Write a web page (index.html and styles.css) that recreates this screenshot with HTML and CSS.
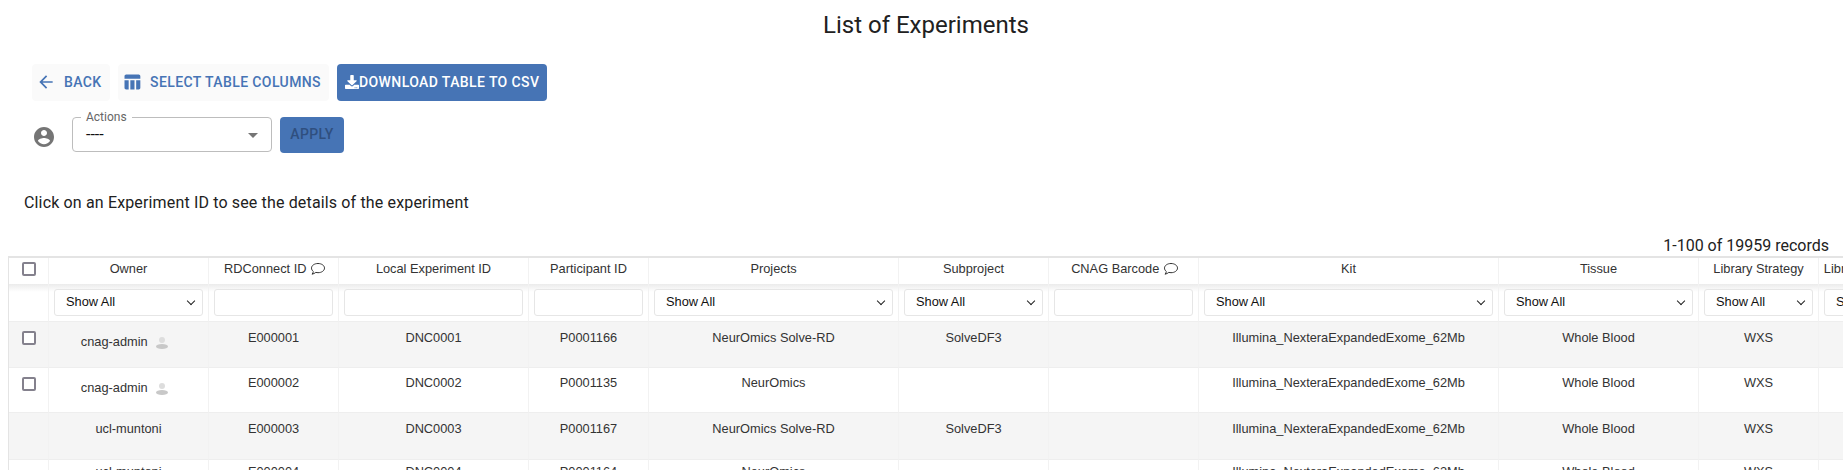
FILE: index.html
```html
<!DOCTYPE html>
<html lang="en">
<head>
<meta charset="utf-8">
<title>List of Experiments</title>
<link rel="stylesheet" href="styles.css">
</head>
<body>
<h1 class="title">List of Experiments</h1>
<div class="toolbar">
  <button class="btn btn-light back"><svg class="ico" viewBox="0 0 24 24"><path d="M20 11H7.83l5.59-5.59L12 4l-8 8 8 8 1.41-1.41L7.83 13H20v-2z"/></svg><span>Back</span></button>
  <button class="btn btn-light cols"><svg class="ico" viewBox="0 0 24 24"><path d="M10 10.02h5V21h-5zM17 21h3c1.1 0 2-.9 2-2v-9h-5v11zm3-18H5c-1.1 0-2 .9-2 2v3h19V5c0-1.1-.9-2-2-2zM3 19c0 1.1.9 2 2 2h3V10H3v9z"/></svg><span>Select table columns</span></button>
  <button class="btn btn-solid dl"><svg class="ico-sm" viewBox="0 0 512 512"><path d="M216 0h80c13.3 0 24 10.7 24 24v168h87.7c17.8 0 26.7 21.5 14.1 34.1L269.7 378.3c-7.5 7.5-19.8 7.5-27.3 0L90.1 226.100c-12.6-12.6-3.7-34.100 14.100-34.100H192V24c0-13.3 10.700-24 24-24zm296 376v112c0 13.3-10.700 24-24 24H24c-13.3 0-24-10.700-24-24V376c0-13.3 10.700-24 24-24h146.700l49 49c20.100 20.100 52.500 20.100 72.600 0l49-49H488c13.3 0 24 10.700 24 24zm-124 88c0-11-9-20-20-20s-20 9-20 20 9 20 20 20 20-9 20-20zm64 0c0-11-9-20-20-20s-20 9-20 20 9 20 20 20 20-9 20-20z"/></svg><span>Download table to CSV</span></button>
</div>
<div class="actions">
  <svg class="user" viewBox="0 0 24 24"><path d="M12 2C6.48 2 2 6.48 2 12s4.48 10 10 10 10-4.48 10-10S17.52 2 12 2zm0 3c1.66 0 3 1.34 3 3s-1.34 3-3 3-3-1.34-3-3 1.34-3 3-3zm0 14.2c-2.5 0-4.71-1.28-6-3.22.03-1.99 4-3.08 6-3.08 1.99 0 5.97 1.09 6 3.08-1.29 1.94-3.5 3.22-6 3.22z"/></svg>
  <div class="field">
    <span class="legend">Actions</span>
    <span class="val">----</span>
    <span class="caret"></span>
  </div>
  <button class="btn btn-solid apply">Apply</button>
</div>
<p class="hint">Click on an Experiment ID to see the details of the experiment</p>
<div class="records">1-100 of 19959 records</div>
<div class="wrap">
<table class="grid">
  <colgroup>
    <col class="c0"><col class="c1"><col class="c2"><col class="c3"><col class="c4"><col class="c5"><col class="c6"><col class="c7"><col class="c8"><col class="c9"><col class="c10"><col class="c11">
  </colgroup>
  <thead>
    <tr class="heads">
      <th><span class="cb"></span></th>
      <th>Owner</th>
      <th>RDConnect ID <svg class="bubble" viewBox="0 0 16 16"><path d="M8 2.5c3.6 0 6.5 2 6.5 4.6s-2.9 4.6-6.5 4.6c-.8 0-1.5-.1-2.2-.3-.9.8-2.2 1.5-3.8 1.8.7-.8 1.2-1.7 1.3-2.7C2.2 9.600 1.5 8.400 1.5 7.100 1.5 4.500 4.400 2.500 8 2.500z"/></svg></th>
      <th>Local Experiment ID</th>
      <th>Participant ID</th>
      <th>Projects</th>
      <th>Subproject</th>
      <th>CNAG Barcode <svg class="bubble" viewBox="0 0 16 16"><path d="M8 2.5c3.6 0 6.5 2 6.5 4.6s-2.9 4.6-6.5 4.6c-.8 0-1.5-.1-2.2-.3-.9.8-2.2 1.5-3.8 1.8.7-.8 1.2-1.7 1.3-2.7C2.2 9.600 1.5 8.400 1.5 7.100 1.5 4.500 4.400 2.500 8 2.500z"/></svg></th>
      <th>Kit</th>
      <th>Tissue</th>
      <th>Library Strategy</th>
      <th>Library Selection</th>
    </tr>
    <tr class="filters">
      <th></th>
      <th><div class="sel">Show All</div></th>
      <th><div class="inp"></div></th>
      <th><div class="inp"></div></th>
      <th><div class="inp"></div></th>
      <th><div class="sel">Show All</div></th>
      <th><div class="sel">Show All</div></th>
      <th><div class="inp"></div></th>
      <th><div class="sel">Show All</div></th>
      <th><div class="sel">Show All</div></th>
      <th><div class="sel">Show All</div></th>
      <th><div class="sel">Show All</div></th>
    </tr>
  </thead>
  <tbody>
    <tr class="odd r1">
      <td><span class="cb"></span></td>
      <td class="owner">cnag-admin <svg class="person" viewBox="0 0 12 12"><circle class="head" cx="6" cy="3" r="3"/><ellipse class="torso" cx="6" cy="9.5" rx="6" ry="2.5"/></svg></td>
      <td>E000001</td><td>DNC0001</td><td>P0001166</td><td>NeurOmics Solve-RD</td><td>SolveDF3</td><td></td><td>Illumina_NexteraExpandedExome_62Mb</td><td>Whole Blood</td><td>WXS</td><td></td>
    </tr>
    <tr class="r2">
      <td><span class="cb"></span></td>
      <td class="owner">cnag-admin <svg class="person" viewBox="0 0 12 12"><circle class="head" cx="6" cy="3" r="3"/><ellipse class="torso" cx="6" cy="9.5" rx="6" ry="2.5"/></svg></td>
      <td>E000002</td><td>DNC0002</td><td>P0001135</td><td>NeurOmics</td><td></td><td></td><td>Illumina_NexteraExpandedExome_62Mb</td><td>Whole Blood</td><td>WXS</td><td></td>
    </tr>
    <tr class="odd r3">
      <td></td>
      <td>ucl-muntoni</td>
      <td>E000003</td><td>DNC0003</td><td>P0001167</td><td>NeurOmics Solve-RD</td><td>SolveDF3</td><td></td><td>Illumina_NexteraExpandedExome_62Mb</td><td>Whole Blood</td><td>WXS</td><td></td>
    </tr>
    <tr class="r4">
      <td></td>
      <td>ucl-muntoni</td>
      <td>E000004</td><td>DNC0004</td><td>P0001164</td><td>NeurOmics</td><td></td><td></td><td>Illumina_NexteraExpandedExome_62Mb</td><td>Whole Blood</td><td>WXS</td><td></td>
    </tr>
  </tbody>
</table>
</div>
</body>
</html>
```

FILE: styles.css
```css
html, body { margin: 0; padding: 0; }
body { width: 1843px; height: 470px; overflow: hidden; background: #fff; font-family: Roboto, sans-serif; color: #212121; }
.title { margin: 0; padding: 10px 0 0 9px; height: 54px; box-sizing: border-box; text-align: center; font-size: 24px; line-height: 30px; font-weight: 400; }
.toolbar { display: flex; gap: 8px; padding: 10px 0 0 32px; height: 37px; }
.btn { display: flex; align-items: center; height: 37px; border: 0; border-radius: 4px; padding: 0 0 2px; font-family: Roboto, sans-serif; font-size: 14px; font-weight: 500; letter-spacing: .4px; text-transform: uppercase; }
.btn-light { background: #fafafa; color: #4674b5; }
.btn-solid { background: #4674b5; color: #fff; }
.back { width: 78px; padding-left: 4px; gap: 8px; }
.cols { width: 211px; padding-left: 4px; gap: 8px; }
.dl { width: 210px; padding-left: 8px; }
.ico { width: 20px; height: 20px; fill: #4674b5; }
.ico-sm { width: 14px; height: 14px; fill: #fff; }
.actions { display: flex; align-items: flex-start; padding: 16px 0 0 32px; height: 36px; }
.user { width: 24px; height: 24px; fill: #757575; margin: 8px 16px 0 0; }
.field { position: relative; width: 200px; height: 35px; box-sizing: border-box; border: 1px solid #bdbdbd; border-radius: 4px; }
.legend { position: absolute; left: 8px; top: -7px; padding: 0 5px; background: #fff; color: #666; font-size: 12px; line-height: 13px; }
.val { position: absolute; left: 13px; top: 8px; font-size: 16px; line-height: 18px; color: #111; }
.caret { position: absolute; right: 13px; top: 15px; width: 0; height: 0; border: 5px solid transparent; border-top-color: #757575; border-bottom: 0; }
.apply { margin-left: 8px; width: 64px; height: 36px; justify-content: center; color: #2f4f7f; }
.hint { margin: 0; padding: 40px 0 0 24px; height: 18px; font-size: 16px; line-height: 19px; letter-spacing: .15px; color: #212121; }
.records { padding: 25px 14px 0 0; height: 20px; text-align: right; font-size: 16px; line-height: 19px; }
.wrap { padding-left: 8px; overflow: hidden; }
.grid { table-layout: fixed; width: 1916px; border-collapse: separate; border-spacing: 0; border-top: 2px solid #e4e4e4; border-left: 1px solid #e4e4e4; font-family: "Liberation Sans", sans-serif; font-size: 12.8px; color: #333; }
.c0 { width: 39px; } .c1 { width: 160px; } .c2 { width: 130px; } .c3 { width: 190px; } .c4 { width: 120px; } .c5 { width: 250px; } .c6 { width: 150px; } .c7 { width: 150px; } .c8 { width: 300px; } .c9 { width: 200px; } .c10 { width: 120px; } .c11 { width: 106px; }
.grid th { font-weight: 400; text-align: center; padding: 0; border-left: 1px solid #f2f2f2; white-space: nowrap; }
.grid th:first-child, .grid td:first-child { border-left: 0; }
.heads th { height: 26px; box-sizing: border-box; padding-bottom: 5px; vertical-align: middle; line-height: 15px; }
.filters th { height: 37px; box-sizing: border-box; padding-top: 5px; vertical-align: top; background: linear-gradient(#ebebeb, #fff 8px); }
.grid td { height: 45px; box-sizing: border-box; text-align: center; vertical-align: top; padding: 8px 0 0; border-left: 1px solid #f2f2f2; border-top: 1px solid #eee; white-space: nowrap; line-height: 15px; }
.odd td { background: #f5f5f5; }
.r1 td { height: 46px; }
.r3 td { height: 47px; }
.r2 td { padding-top: 7px; }
.r4 td { padding-top: 4px; }
.grid td.owner { padding: 12px 8px 0 0; }
.grid td:first-child { padding-top: 9px; }
.sel, .inp { box-sizing: border-box; height: 27px; margin: 0 5px; border: 1px solid #e6e6e6; border-radius: 3px; background: #fff; text-align: left; line-height: 24px; color: #111; }
.sel { padding-left: 11px; position: relative; overflow: hidden; }
.sel::after { content: ""; position: absolute; right: 8px; top: 8px; width: 5px; height: 5px; border-right: 1.5px solid #222; border-bottom: 1.5px solid #222; transform: rotate(45deg); }
.cb { display: block; box-sizing: border-box; width: 14px; height: 14px; margin-left: 13px; border: 2px solid #84818d; border-radius: 2px; background: #fff; }
.bubble { width: 16px; height: 16px; fill: none; stroke: #333; stroke-width: 1; vertical-align: -4px; margin-right: -3px; }
.person { width: 12px; height: 12px; margin-left: 5px; vertical-align: -3px; }
.head { fill: #ddd; }
.torso { fill: #c8c8c8; }
```
